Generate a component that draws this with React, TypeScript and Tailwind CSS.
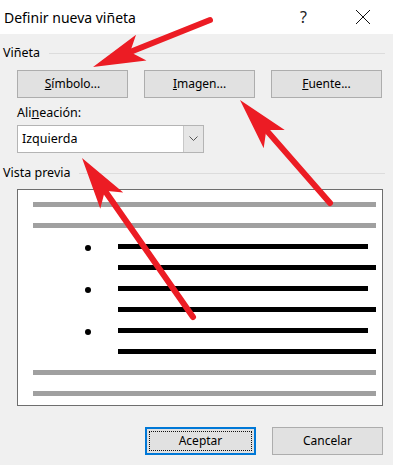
import type { ReactNode } from "react";

function Btn({ children, focused }: { children: ReactNode; focused?: boolean }) {
  return (
    <div
      className={
        "relative w-[111px] h-[28px] flex items-center justify-center bg-[#e1e1e1] text-[12px] text-[#000] " +
        (focused ? "border-2 border-[#0078d7]" : "border border-[#adadad]")
      }
    >
      {focused && <div className="absolute inset-[2px] border border-dotted border-[#111]" />}
      <span>{children}</span>
    </div>
  );
}

function GroupHeader({ label }: { label: string }) {
  return (
    <div className="flex items-center h-[18px] pl-[3px] pr-[8px]">
      <span className="text-[12.5px] text-[#000]">{label}</span>
      <div className="flex-1 h-px bg-[#dcdcdc] ml-[9px]" />
    </div>
  );
}

function Arrow({ x1, y1, x2, y2 }: { x1: number; y1: number; x2: number; y2: number }) {
  const dx = x2 - x1;
  const dy = y2 - y1;
  const len = Math.hypot(dx, dy);
  const ux = dx / len;
  const uy = dy / len;
  const head = 52;
  const half = 14;
  const bx = x2 - ux * head;
  const by = y2 - uy * head;
  const nx = bx + ux * 12;
  const ny = by + uy * 12;
  const pts = [
    [x2, y2],
    [bx - uy * half, by + ux * half],
    [nx, ny],
    [bx + uy * half, by - ux * half],
  ]
    .map((p) => p.join(","))
    .join(" ");
  return (
    <g>
      <line x1={x1} y1={y1} x2={nx} y2={ny} stroke="#ec1c24" strokeWidth={6} strokeLinecap="round" />
      <polygon points={pts} fill="#ec1c24" />
    </g>
  );
}

const bulletRows = [true, false, true, false, true, false];

export default function App() {
  return (
    <div
      className="relative w-[393px] h-[465px] overflow-hidden bg-[#f0f0f0] text-black"
      style={{ fontFamily: '"Noto Sans", "Open Sans", sans-serif' }}
    >
      {/* barra de título */}
      <div className="h-[34px] bg-white flex items-center pl-[4px]">
        <span className="text-[14px] text-[#000]">Definir nueva viñeta</span>
        <div className="flex-1" />
        <span className="text-[16px] text-[#222] mr-[48px]">?</span>
        <svg width="16" height="16" viewBox="0 0 16 16" className="mr-[22px]">
          <path d="M1 1 L15 15 M15 1 L1 15" stroke="#111" strokeWidth="1" fill="none" />
        </svg>
      </div>

      <div className="mt-[10px]">
        <GroupHeader label="Viñeta" />
      </div>

      <div className="mt-[8px] pl-[17px] flex gap-[16px]">
        <Btn>
          <span className="underline">S</span>ímbolo...
        </Btn>
        <Btn>
          <span className="underline">I</span>magen...
        </Btn>
        <Btn>
          <span className="underline">F</span>uente...
        </Btn>
      </div>

      <div className="mt-[6px] pl-[17px] h-[18px] flex items-center text-[12.5px]">
        <span>
          Ali<span className="underline">n</span>eación:
        </span>
      </div>

      <div className="mt-[3px] ml-[17px] w-[187px] h-[28px] flex bg-white border border-[#b4b4b4]">
        <div className="flex-1 flex items-center pl-[4px] text-[12.5px]">Izquierda</div>
        <div className="w-[20px] bg-[#e6e6e6] border-l border-[#c8c8c8] flex items-center justify-center">
          <svg width="9" height="6" viewBox="0 0 9 6">
            <path d="M0.5 0.5 L4.5 4.5 L8.5 0.5" stroke="#555" strokeWidth="1" fill="none" />
          </svg>
        </div>
      </div>

      <div className="mt-[11px]">
        <GroupHeader label="Vista previa" />
      </div>

      {/* vista previa */}
      <div className="mt-[7px] ml-[17px] w-[366px] h-[217px] bg-white border border-[#6e6e6e] pt-[12px] pl-[15px] pr-[6px] flex flex-col gap-[16px]">
        <div className="h-[5px] bg-[#a0a0a0]" />
        <div className="h-[5px] bg-[#a0a0a0]" />
        {bulletRows.map((bullet, i) => (
          <div key={i} className="h-[5px] flex items-center">
            <div className="w-[85px] h-[5px] flex items-center">
              {bullet && <div className="ml-[52px] mt-[2px] w-[6px] h-[6px] rounded-full bg-black" />}
            </div>
            <div className={"flex-1 h-[5px] bg-black " + (bullet ? "mr-[8px]" : "")} />
          </div>
        ))}
        <div className="h-[5px] bg-[#a0a0a0]" />
        <div className="h-[5px] bg-[#a0a0a0]" />
      </div>

      <div className="mt-[21px] pr-[10px] flex justify-end gap-[16px]">
        <Btn focused>Aceptar</Btn>
        <Btn>Cancelar</Btn>
      </div>

      {/* flechas */}
      <svg className="absolute inset-0 pointer-events-none" width="393" height="465">
        <Arrow x1={210} y1={20} x2={93} y2={67} />
        <Arrow x1={330} y1={203} x2={240} y2={100} />
        <Arrow x1={193} y1={317} x2={82} y2={158} />
      </svg>
    </div>
  );
}
